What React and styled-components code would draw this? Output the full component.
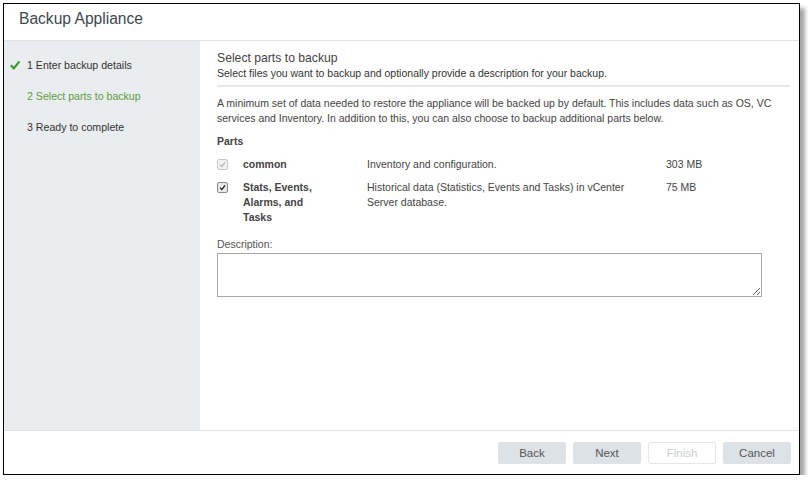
import React from "react";
import styled, { createGlobalStyle } from "styled-components";

const Global = createGlobalStyle`
  html, body { margin: 0; padding: 0; background: #fff; }
  body { font-family: "Liberation Sans", Arial, sans-serif; color: #333; }
`;

const Page = styled.div`
  padding: 3px 0 0 3px;
`;

const Dialog = styled.div`
  width: 795px;
  height: 470px;
  border: 1px solid #000;
  box-shadow: 5px 5px 4px rgba(0, 0, 0, 0.35);
  display: flex;
  flex-direction: column;
  background: #fff;
`;

const Header = styled.div`
  height: 37px;
  box-sizing: border-box;
  border-bottom: 1px solid #dde3e8;
  padding: 6px 0 0 15px;
  font-size: 15.6px;
  line-height: 18px;
  color: #3d4750;
  flex-shrink: 0;
`;

const Body = styled.div`
  flex: 1;
  display: flex;
  min-height: 0;
`;

const Sidebar = styled.div`
  width: 196px;
  background: #e9edf0;
  padding-top: 17px;
  display: flex;
  flex-direction: column;
  gap: 17px;
`;

const Step = styled.div`
  display: flex;
  align-items: center;
  height: 14px;
  font-size: 10.6px;
  padding-left: 5px;
  color: ${(p) => (p.$active ? "#5e9e3a" : "#333")};
`;

const StepIcon = styled.span`
  width: 12px;
  height: 12px;
  margin-right: 6px;
  display: flex;
  align-items: center;
`;

const Content = styled.div`
  flex: 1;
  padding: 9px 9px 0 17px;
  font-size: 10.5px;
`;

const Title = styled.div`
  font-size: 12.2px;
  color: #444;
  line-height: 16px;
`;

const Subtitle = styled.div`
  line-height: 14px;
  color: #333;
  padding-bottom: 5px;
  border-bottom: 2px solid #e4e8eb;
`;

const Para = styled.p`
  margin: 9px 0 0;
  line-height: 15px;
  color: #444;
`;

const Label = styled.div`
  margin-top: 8px;
  font-weight: bold;
  color: #444;
  line-height: 14px;
`;

const PartsGrid = styled.div`
  display: grid;
  grid-template-columns: 26px 124px 299px auto;
  row-gap: 8px;
  margin-top: 9px;
  line-height: 15px;
  color: #444;
`;

const Box = styled.span`
  width: 9px;
  height: 9px;
  margin-top: 2px;
  border: 1px solid ${(p) => (p.$disabled ? "#c8c8c8" : "#8a8a8a")};
  border-radius: 2px;
  background: ${(p) => (p.$disabled ? "#f0f0f0" : "#e8e8e8")};
  display: flex;
  align-items: center;
  justify-content: center;
`;

const Name = styled.div`
  font-weight: bold;
`;

const Field = styled.div`
  margin-top: 13px;
  color: #555;
`;

const TextArea = styled.textarea`
  display: block;
  box-sizing: border-box;
  width: 545px;
  height: 44px;
  margin-top: 3px;
  border: 1px solid #a9a9a9;
  border-radius: 0;
  font-family: inherit;
  outline: none;
`;

const Footer = styled.div`
  height: 44px;
  border-top: 1px solid #dde3e8;
  display: flex;
  justify-content: flex-end;
  gap: 7px;
  padding: 11px 8px 0 0;
  box-sizing: border-box;
  flex-shrink: 0;
`;

const Button = styled.button`
  width: 68px;
  height: 22px;
  border: 1px solid ${(p) => (p.disabled ? "#e3e7ea" : "#dde2e7")};
  background: ${(p) => (p.disabled ? "#fff" : "#dde2e7")};
  color: ${(p) => (p.disabled ? "#c8cdd2" : "#555")};
  font-family: "Liberation Sans", Arial, sans-serif;
  font-size: 11.5px;
  border-radius: 2px;
  padding: 0;
`;

const Check = ({ color, size = 8 }) => (
  <svg width={size} height={size} viewBox="0 0 10 10">
    <path d="M1.5 5.2 L4 7.8 L8.7 2" fill="none" stroke={color} strokeWidth="1.8" />
  </svg>
);

export default function App() {
  return (
    <Page>
      <Global />
      <Dialog>
        <Header>Backup Appliance</Header>
        <Body>
          <Sidebar>
            <Step>
              <StepIcon>
                <Check color="#3a9a2a" size={12} />
              </StepIcon>
              1 Enter backup details
            </Step>
            <Step $active>
              <StepIcon />2 Select parts to backup
            </Step>
            <Step>
              <StepIcon />3 Ready to complete
            </Step>
          </Sidebar>
          <Content>
            <Title>Select parts to backup</Title>
            <Subtitle>Select files you want to backup and optionally provide a description for your backup.</Subtitle>
            <Para>
              A minimum set of data needed to restore the appliance will be backed up by default. This includes data such as OS, VC
              services and Inventory. In addition to this, you can also choose to backup additional parts below.
            </Para>
            <Label>Parts</Label>
            <PartsGrid>
              <Box $disabled>
                <Check color="#b5b5b5" size={7} />
              </Box>
              <Name>common</Name>
              <div>Inventory and configuration.</div>
              <div>303 MB</div>
              <Box>
                <Check color="#222" size={7} />
              </Box>
              <Name>
                Stats, Events,
                <br />
                Alarms, and
                <br />
                Tasks
              </Name>
              <div>
                Historical data (Statistics, Events and Tasks) in vCenter
                <br />
                Server database.
              </div>
              <div>75 MB</div>
            </PartsGrid>
            <Field>Description:</Field>
            <TextArea />
          </Content>
        </Body>
        <Footer>
          <Button>Back</Button>
          <Button>Next</Button>
          <Button disabled>Finish</Button>
          <Button>Cancel</Button>
        </Footer>
      </Dialog>
    </Page>
  );
}
